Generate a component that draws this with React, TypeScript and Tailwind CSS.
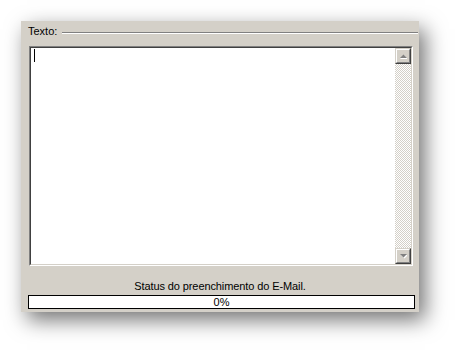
import React from "react";

const font = "font-['Tahoma','Liberation_Sans',Arial,sans-serif]";

function ScrollButton({ dir }: { dir: "up" | "down" }) {
  return (
    <div className="w-[16px] h-[16px] bg-[#d4d0c8] border border-t-[#d4d0c8] border-l-[#d4d0c8] border-r-[#404040] border-b-[#404040]">
      <div className="w-full h-full border border-t-white border-l-white border-r-[#808080] border-b-[#808080] flex items-center justify-center">
        <svg width="7" height="5" viewBox="0 0 7 5">
          {dir === "up" ? (
            <>
              <path d="M4 1 L8 5 L0 5 Z" fill="#ffffff" />
              <path d="M3.5 0.5 L7 4 L0 4 Z" fill="#808080" />
            </>
          ) : (
            <>
              <path d="M1 1 L8 1 L4.5 4.5 Z" fill="#ffffff" />
              <path d="M0 0 L7 0 L3.5 3.5 Z" fill="#808080" />
            </>
          )}
        </svg>
      </div>
    </div>
  );
}

function TextBox() {
  return (
    <div className="ml-[8px] w-[384px] h-[220px] border border-t-[#808080] border-l-[#808080] border-r-white border-b-white">
      <div className="w-full h-full flex border border-t-[#404040] border-l-[#404040] border-r-[#d4d0c8] border-b-[#d4d0c8] bg-white">
        <div className="flex-1">
          <div className="ml-[3px] mt-[1px] h-[13px] w-px bg-black" />
        </div>
        <div className="w-[16px] flex flex-col bg-[image:repeating-conic-gradient(#d4d0c8_0_25%,#ffffff_0_50%)] bg-[length:2px_2px]">
          <ScrollButton dir="up" />
          <div className="flex-1" />
          <ScrollButton dir="down" />
        </div>
      </div>
    </div>
  );
}

export default function App() {
  return (
    <div className={`w-[461px] h-[355px] bg-white pt-[21px] pl-[21px] ${font}`}>
      <div className="w-[398px] h-[291px] bg-[#d4d0c8] flex flex-col shadow-[6px_8px_20px_rgba(0,0,0,0.55)] text-[11px] text-black">
        <div className="h-[25px] flex items-start pt-[4px] pl-[7px]">
          <span className="leading-[13px]">Texto:</span>
          <div className="flex-1 mt-[7px] ml-[5px] mr-[1px] h-[2px] border-t border-t-[#808080] border-b border-b-white" />
        </div>
        <TextBox />
        <div className="mt-[14px] h-[13px] leading-[13px] text-center tracking-[-0.1px]">
          Status do preenchimento do E-Mail.
        </div>
        <div className="mt-[2px] ml-[7px] w-[387px] h-[14px] border border-black bg-white text-center leading-[12px]">
          0%
        </div>
      </div>
    </div>
  );
}
